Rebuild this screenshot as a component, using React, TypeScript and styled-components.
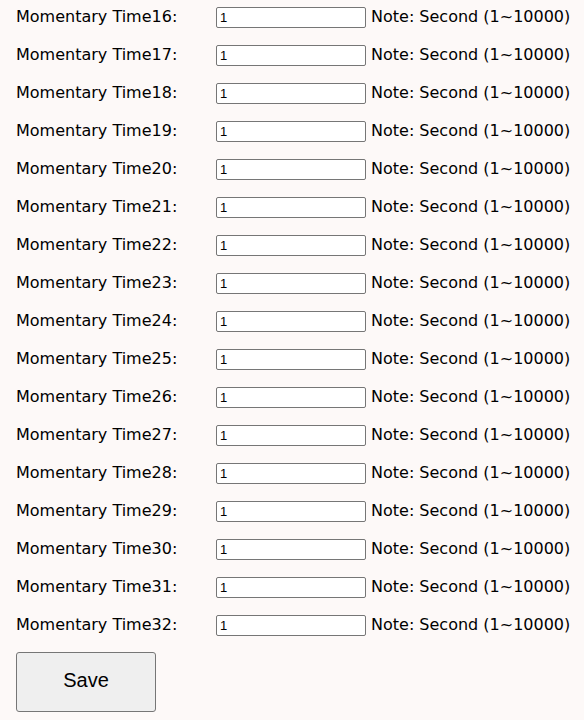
import React, { useState } from "react";
import styled, { createGlobalStyle } from "styled-components";

const GlobalStyle = createGlobalStyle`
  html, body {
    margin: 0;
    padding: 0;
    background: #fdf9f8;
  }
  body {
    font-family: "DejaVu Sans", Verdana, sans-serif;
    color: #000;
  }
`;

const FIRST = 16;
const LAST = 32;

const App = () => {
  const [values, setValues] = useState<Record<number, string>>(() => {
    const init: Record<number, string> = {};
    for (let i = FIRST; i <= LAST; i++) init[i] = "1";
    return init;
  });

  const rows = [];
  for (let i = FIRST; i <= LAST; i++) rows.push(i);

  return (
    <>
      <GlobalStyle />
      <Page>
        <Form>
          {rows.map((n) => (
            <Row key={n}>
              <Label>Momentary Time{n}:</Label>
              <Field
                type="text"
                value={values[n]}
                onChange={(e) => setValues((prev) => ({ ...prev, [n]: e.target.value }))}
              />
              <Note>Note: Second (1~10000)</Note>
            </Row>
          ))}
        </Form>
        <SaveButton type="button">Save</SaveButton>
      </Page>
    </>
  );
};

const Page = styled.div`
  padding: 0 0 8px 16px;
`;

const Form = styled.div`
  display: flex;
  flex-direction: column;
  gap: 4px;
`;

const Row = styled.div`
  display: flex;
  align-items: center;
  height: 34px;
`;

const Label = styled.span`
  width: 200px;
  margin-bottom: 2px;
  font-size: 16px;
  white-space: nowrap;
`;

const Field = styled.input`
  box-sizing: border-box;
  width: 150px;
  height: 21px;
  margin: 0 5px 0 0;
  padding: 1px 3px 0;
  border: 1px solid #767676;
  border-radius: 2px;
  background: #fff;
  font-family: "Liberation Sans", Arial, sans-serif;
  font-size: 13px;
  color: #000;
`;

const Note = styled.span`
  margin-bottom: 2px;
  font-size: 16px;
  white-space: nowrap;
`;

const SaveButton = styled.button`
  display: block;
  box-sizing: border-box;
  margin-top: 10px;
  width: 140px;
  height: 60px;
  padding: 0 0 3px;
  background: #efefef;
  border: 1px solid #767676;
  border-radius: 3px;
  font-family: "Liberation Sans", Arial, sans-serif;
  font-size: 20px;
  color: #000;
  cursor: pointer;
`;

export default App;
